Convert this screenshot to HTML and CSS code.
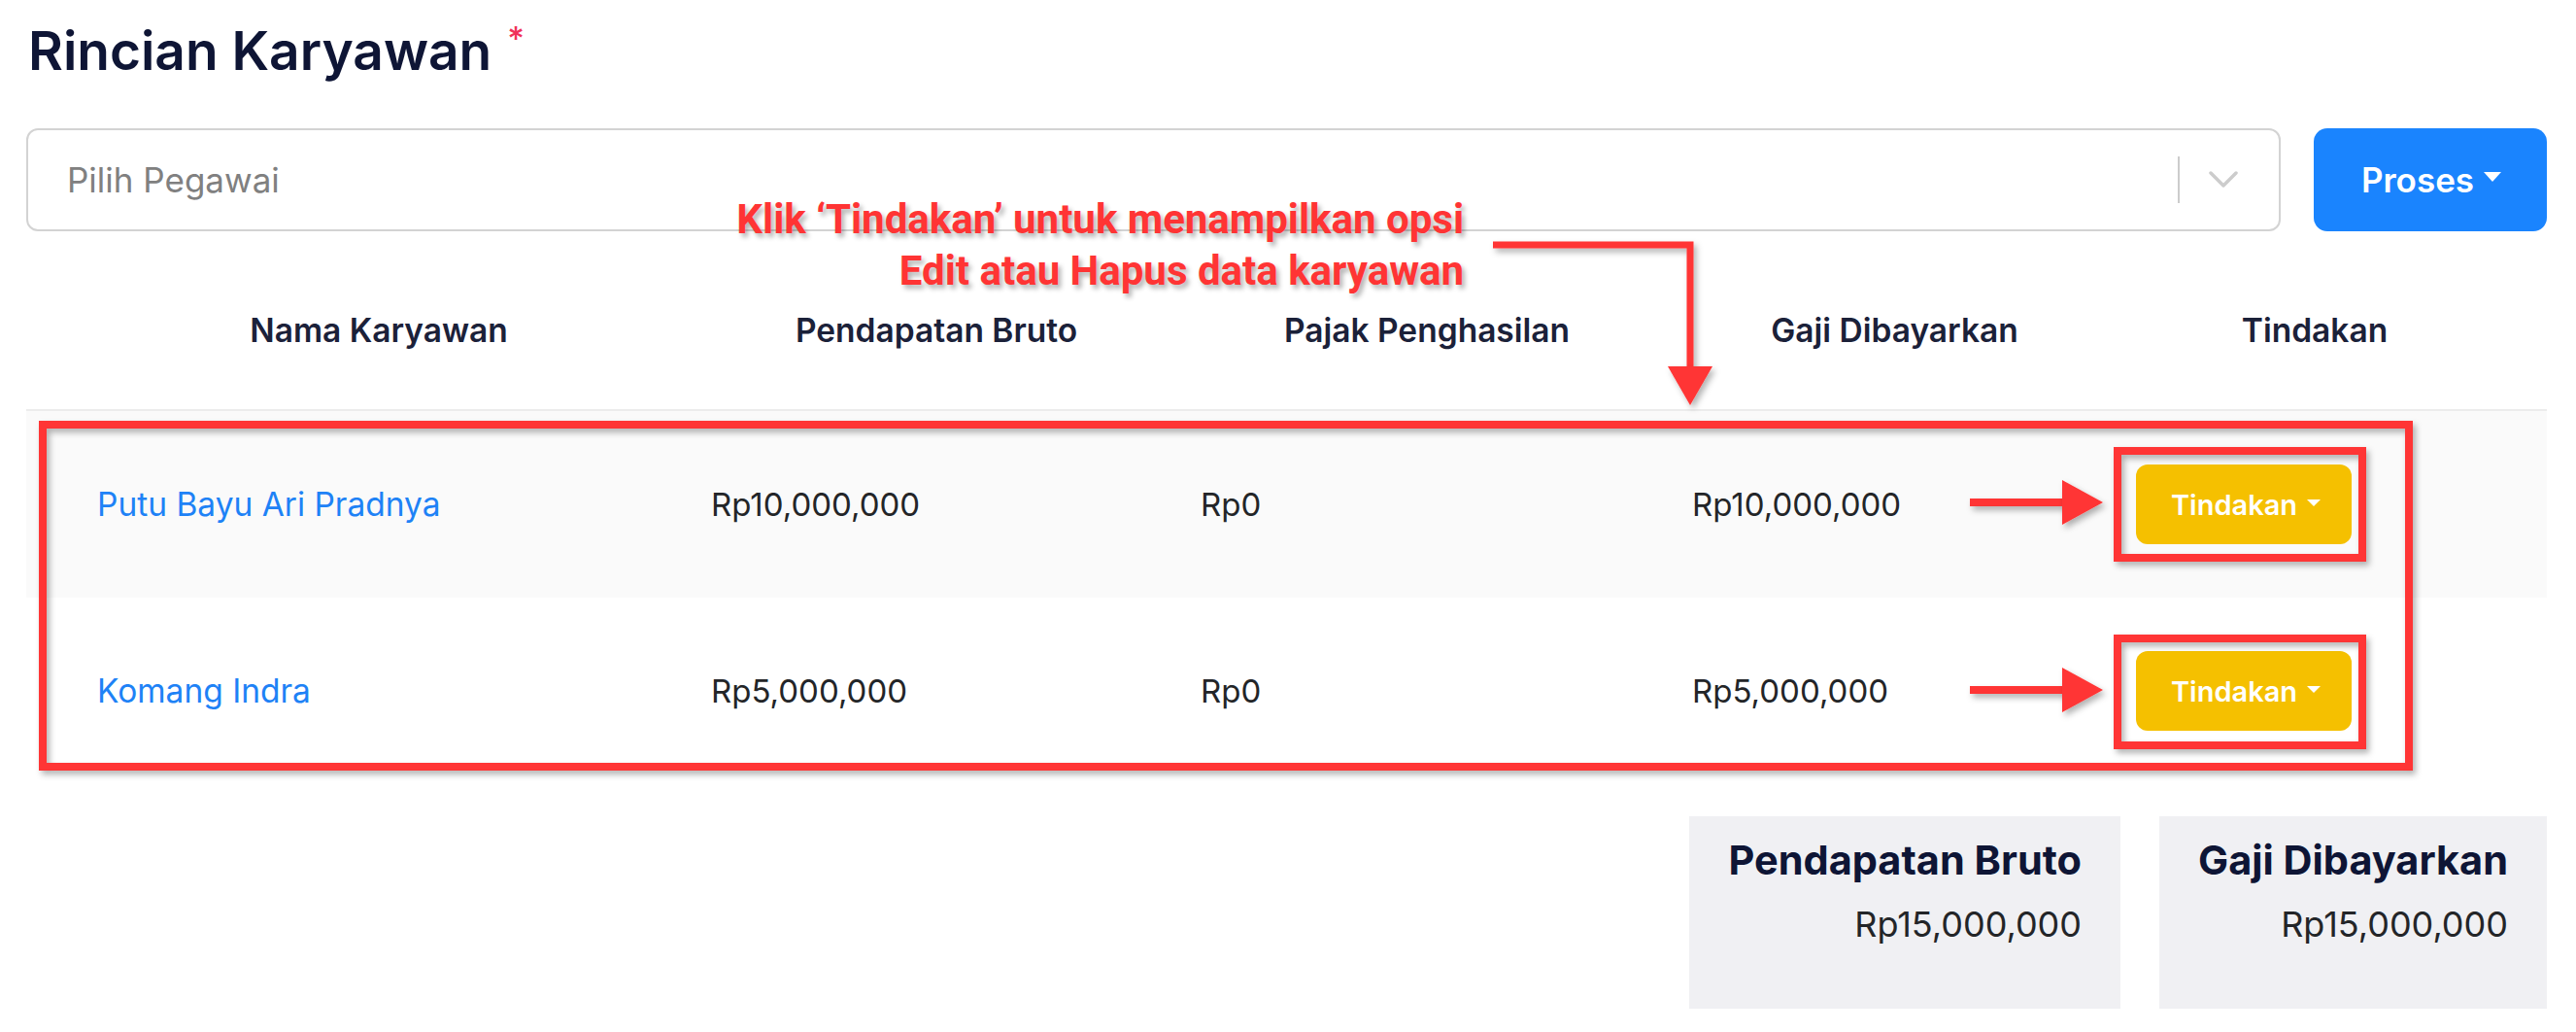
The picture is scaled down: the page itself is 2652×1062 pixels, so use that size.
FILE: index.html
```html
<!DOCTYPE html>
<html lang="id">
<head>
<meta charset="utf-8">
<title>Rincian Karyawan</title>
<link rel="stylesheet" href="styles.css">
</head>
<body>
<div class="page">
  <h1 class="title">Rincian Karyawan<span class="req">*</span></h1>

  <div class="toolbar">
    <div class="select">
      <span class="placeholder">Pilih Pegawai</span>
      <span class="sep"></span>
      <svg class="chevron" viewBox="0 0 30 18" width="30" height="18"><path d="M2 2 L15 15 L28 2" fill="none" stroke="#cccccc" stroke-width="3.5" stroke-linecap="round" stroke-linejoin="round"/></svg>
    </div>
    <button class="btn-proses">Proses<span class="caret"></span></button>
  </div>

  <div class="table">
    <div class="grid thead">
      <div class="th">Nama Karyawan</div>
      <div class="th">Pendapatan Bruto</div>
      <div class="th">Pajak Penghasilan</div>
      <div class="th">Gaji Dibayarkan</div>
      <div class="th">Tindakan</div>
    </div>
    <div class="grid trow striped">
      <div class="td"><a class="link">Putu Bayu Ari Pradnya</a></div>
      <div class="td">Rp10,000,000</div>
      <div class="td">Rp0</div>
      <div class="td">Rp10,000,000</div>
      <div class="td"><button class="btn-action">Tindakan<span class="caret small"></span></button></div>
    </div>
    <div class="grid trow">
      <div class="td"><a class="link">Komang Indra</a></div>
      <div class="td">Rp5,000,000</div>
      <div class="td">Rp0</div>
      <div class="td">Rp5,000,000</div>
      <div class="td"><button class="btn-action">Tindakan<span class="caret small"></span></button></div>
    </div>
  </div>

  <div class="summary">
    <div class="card">
      <div class="card-title">Pendapatan Bruto</div>
      <div class="card-value">Rp15,000,000</div>
    </div>
    <div class="card">
      <div class="card-title">Gaji Dibayarkan</div>
      <div class="card-value">Rp15,000,000</div>
    </div>
  </div>

  <div class="annot-text">Klik ‘Tindakan’ untuk menampilkan opsi<br>Edit atau Hapus data karyawan</div>

  <svg class="overlay" width="2652" height="1062" viewBox="0 0 2652 1062">
    <defs>
      <filter id="sh" x="-5%" y="-5%" width="110%" height="120%">
        <feDropShadow dx="3" dy="4" stdDeviation="3" flood-color="#000" flood-opacity="0.3"/>
      </filter>
    </defs>
    <g filter="url(#sh)" fill="none" stroke="#ff3434">
      <polyline points="1537,252 1740,252 1740,382" stroke-width="7"/>
      <rect x="44" y="437" width="2436" height="352" stroke-width="8"/>
      <rect x="2180" y="464" width="252" height="110" stroke-width="8"/>
      <rect x="2180" y="657" width="252" height="110" stroke-width="8"/>
      <line x1="2028" y1="517" x2="2128" y2="517" stroke-width="8"/>
      <line x1="2028" y1="710" x2="2128" y2="710" stroke-width="8"/>
    </g>
    <g filter="url(#sh)" fill="#ff3434">
      <polygon points="1717,377 1763,377 1740,417"/>
      <polygon points="2123,494 2123,540 2165,517"/>
      <polygon points="2123,687 2123,733 2165,710"/>
    </g>
  </svg>
</div>
</body>
</html>
```

FILE: styles.css
```css
* { box-sizing: border-box; }

html, body {
  margin: 0;
  padding: 0;
  background: #ffffff;
}

body {
  font-family: "Inter", "Noto Sans", sans-serif;
  color: #222529;
}

.page {
  position: relative;
  width: 2652px;
  height: 1062px;
  padding: 19px 30px 0 27px;
  overflow: hidden;
}

.title {
  margin: 0;
  font-size: 55px;
  line-height: 66px;
  font-weight: 600;
  color: #0e1535;
  padding-left: 2px;
}

.req {
  color: #f0325a;
  font-size: 34px;
  font-weight: 500;
  vertical-align: top;
  margin-left: 16px;
  line-height: 34px;
  position: relative;
  top: 4px;
}

.toolbar {
  display: flex;
  gap: 34px;
  margin-top: 47px;
  height: 106px;
}

.select {
  flex: 1;
  display: flex;
  align-items: center;
  border: 2px solid #d3d3d3;
  border-radius: 12px;
  padding-left: 40px;
}

.placeholder {
  flex: 1;
  font-size: 35px;
  color: #808080;
}

.sep {
  width: 2px;
  height: 48px;
  background: #cccccc;
}

.chevron {
  margin-left: 30px;
  margin-right: 42px;
}

.btn-proses {
  width: 240px;
  border: none;
  border-radius: 14px;
  background: #1a84fe;
  color: #ffffff;
  font-family: "Inter", sans-serif;
  font-size: 35px;
  font-weight: 600;
  display: flex;
  align-items: center;
  justify-content: center;
  gap: 10px;
  padding: 0 0 0 2px;
}

.caret {
  display: inline-block;
  width: 0;
  height: 0;
  border-left: 9px solid transparent;
  border-right: 9px solid transparent;
  border-top: 10px solid #ffffff;
  margin-top: -6px;
}

.caret.small {
  border-left-width: 7px;
  border-right-width: 7px;
  border-top-width: 7px;
  margin-top: -4px;
}

.table {
  margin-top: 20px;
}

.grid {
  display: grid;
  grid-template-columns: 632px 504px 506px 457px 408px;
  padding-left: 53px;
  padding-right: 35px;
  align-items: center;
}

.thead {
  height: 165px;
  border-bottom: 2px solid #ececec;
}

.th {
  text-align: center;
  font-size: 33.5px;
  font-weight: 600;
  color: #1b2139;
}

.th:first-child {
  padding-right: 12px;
}

.trow {
  height: 192px;
}

.striped {
  background: #fafafa;
}

.td {
  padding-left: 20px;
  font-size: 33px;
  color: #232528;
}

.link {
  color: #1e82f6;
  font-size: 33.5px;
}

.btn-action {
  width: 222px;
  height: 82px;
  border: none;
  border-radius: 12px;
  background: #f5c000;
  color: #ffffff;
  font-family: "Inter", sans-serif;
  font-size: 29px;
  font-weight: 600;
  display: flex;
  align-items: center;
  justify-content: center;
  gap: 10px;
  padding: 0 0 0 4px;
}

.summary {
  display: flex;
  justify-content: flex-end;
  gap: 40px;
  margin-top: 33px;
}

.card {
  background: #f0f0f3;
  height: 198px;
  padding: 20px 40px 0 40px;
  text-align: right;
}

.card-title {
  font-size: 41.5px;
  line-height: 50px;
  font-weight: 700;
  color: #0e1535;
}

.card-value {
  margin-top: 20px;
  font-size: 36px;
  line-height: 42px;
  color: #232528;
}

.annot-text {
  position: absolute;
  top: 199px;
  right: 1145px;
  text-align: right;
  font-family: "Roboto", "Liberation Sans", sans-serif;
  font-weight: 700;
  font-size: 42px;
  line-height: 53px;
  color: #ff3434;
  text-shadow: 3px 4px 5px rgba(0, 0, 0, 0.3);
  white-space: nowrap;
}

.overlay {
  position: absolute;
  top: 0;
  left: 0;
  pointer-events: none;
}
```
